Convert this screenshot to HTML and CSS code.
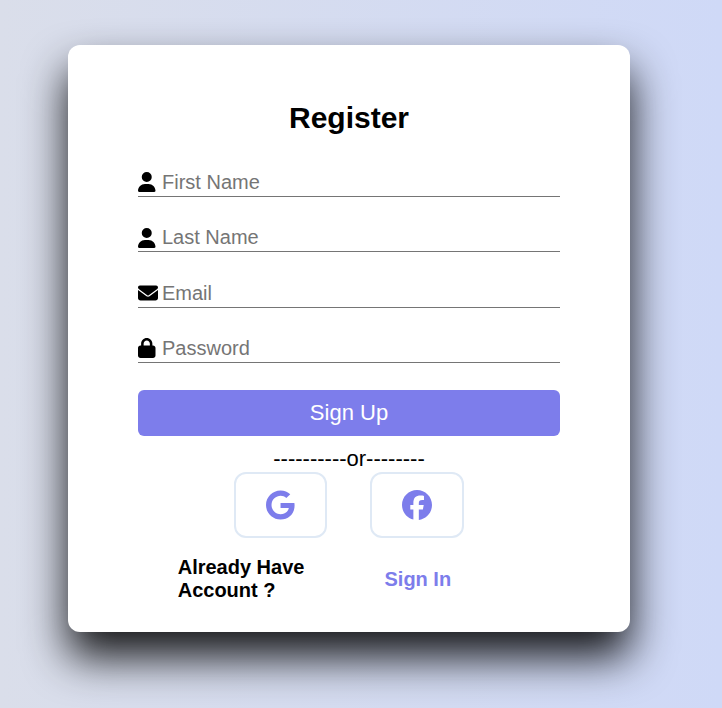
FILE: index.html
```
<!DOCTYPE html>
<html lang="en">
<head>
<meta charset="utf-8">
<title>Register</title>
<link rel="stylesheet" href="styles.css">
</head>
<body>
<main class="card">
  <h1 class="title">Register</h1>
  <form class="form">
    <label class="field">
      <svg class="icon" viewBox="0 0 448 512"><path d="M224 256A128 128 0 1 0 224 0a128 128 0 1 0 0 256zm-45.7 48C79.8 304 0 383.8 0 482.3C0 498.7 13.3 512 29.7 512H418.3c16.4 0 29.7-13.3 29.7-29.7C448 383.8 368.2 304 269.7 304H178.3z"/></svg>
      <input type="text" placeholder="First Name">
    </label>
    <label class="field">
      <svg class="icon" viewBox="0 0 448 512"><path d="M224 256A128 128 0 1 0 224 0a128 128 0 1 0 0 256zm-45.7 48C79.8 304 0 383.8 0 482.3C0 498.7 13.3 512 29.7 512H418.3c16.4 0 29.7-13.3 29.7-29.7C448 383.8 368.2 304 269.7 304H178.3z"/></svg>
      <input type="text" placeholder="Last Name">
    </label>
    <label class="field">
      <svg class="icon icon-wide" viewBox="0 0 512 512"><path d="M48 64C21.5 64 0 85.5 0 112c0 15.1 7.1 29.3 19.2 38.4L236.8 313.6c11.4 8.5 27 8.5 38.4 0L492.8 150.4c12.1-9.1 19.2-23.3 19.2-38.4c0-26.5-21.5-48-48-48H48zM0 176V384c0 35.3 28.7 64 64 64H448c35.3 0 64-28.7 64-64V176L294.4 339.2c-22.8 17.1-54 17.1-76.8 0L0 176z"/></svg>
      <input type="email" placeholder="Email">
    </label>
    <label class="field">
      <svg class="icon" viewBox="0 0 448 512"><path d="M144 144v48H304V144c0-44.2-35.8-80-80-80s-80 35.8-80 80zM80 192V144C80 64.5 144.5 0 224 0s144 64.5 144 144v48h16c35.3 0 64 28.7 64 64V448c0 35.3-28.7 64-64 64H64c-35.3 0-64-28.7-64-64V256c0-35.3 28.7-64 64-64H80z"/></svg>
      <input type="password" placeholder="Password">
    </label>
    <button class="submit" type="button">Sign Up</button>
  </form>
  <p class="or">----------or--------</p>
  <div class="social">
    <a class="provider provider-google"><svg class="google" viewBox="0 0 488 512"><path d="M488 261.8C488 403.3 391.1 504 248 504 110.8 504 0 393.2 0 256S110.8 8 248 8c66.8 0 123 24.5 166.3 64.9l-67.5 64.9C258.5 52.6 94.3 116.6 94.3 256c0 86.5 69.1 156.6 153.7 156.6 98.2 0 135-70.4 140.8-106.9H248v-85.3h236.1c2.3 12.7 3.9 24.9 3.9 41.4z"/></svg></a>
    <a class="provider"><svg class="facebook" viewBox="0 0 512 512"><path d="M512 256C512 114.6 397.4 0 256 0S0 114.6 0 256C0 376 82.7 476.8 194.2 504.5V334.2H141.4V256h52.8V222.3c0-87.1 39.4-127.5 125-127.5c16.2 0 44.2 3.2 55.7 6.4V172c-6-.6-16.5-1-29.6-1c-42 0-58.2 15.9-58.2 57.2V256h83.6l-14.4 78.2H287V510.1C413.8 494.8 512 386.9 512 256h0z"/></svg></a>
  </div>
  <div class="links">
    <p class="question">Already Have Account ?</p>
    <a class="signin">Sign In</a>
  </div>
</main>
</body>
</html>
```
FILE: styles.css
```
* {
  box-sizing: border-box;
  margin: 0;
  padding: 0;
}

body {
  height: 708px;
  padding: 45px 0 0 68px;
  overflow: hidden;
  font-family: "Liberation Sans", Arial, sans-serif;
  background: linear-gradient(to right, #dadeea, #cfd9f7);
}

.card {
  width: 562px;
  height: 587px;
  padding: 55px 70px 0;
  background: #fff;
  border-radius: 12px;
  box-shadow: 0 25px 44px rgba(0, 0, 1, 0.9);
}

.title {
  font-size: 30px;
  line-height: 35px;
  text-align: center;
}

.form {
  padding-top: 33px;
}

.field {
  display: flex;
  align-items: flex-start;
  height: 29px;
  margin-bottom: 26.33px;
  border-bottom: 1px solid #757575;
}

.field:last-of-type {
  margin-bottom: 27px;
}

.icon {
  width: 17.5px;
  height: 20px;
  margin: 4.4px 6.5px 0 0;
}

.icon-wide {
  width: 20px;
  margin-right: 4px;
}

.field input {
  flex: 1;
  min-width: 0;
  height: 23px;
  margin-top: 3px;
  border: 0;
  outline: 0;
  background: transparent;
  font: 20px "Liberation Sans", Arial, sans-serif;
}

.field input::placeholder {
  color: #757575;
}

.submit {
  display: block;
  width: 100%;
  height: 46px;
  border: 0;
  border-radius: 6px;
  background: #7d7deb;
  color: #fff;
  font: 22px "Liberation Sans", Arial, sans-serif;
}

.or {
  height: 36px;
  padding-top: 10px;
  font-size: 22px;
  line-height: 25px;
  text-align: center;
}

.social {
  display: flex;
  justify-content: center;
  gap: 43px;
}

.provider {
  display: flex;
  align-items: center;
  justify-content: center;
  width: 94px;
  height: 66px;
  border: 2px solid #dfe9f5;
  border-radius: 12px;
  fill: #7d7deb;
}

.provider-google {
  width: 93px;
}

.google {
  width: 28.6px;
  height: 30px;
}

.facebook {
  width: 30px;
  height: 30px;
}

.links {
  display: flex;
  align-items: center;
  gap: 65.8px;
  padding: 18px 0 0 39.7px;
  font-size: 20px;
  line-height: 23px;
  font-weight: bold;
}

.question {
  width: 141px;
}

.signin {
  padding-top: 2px;
  color: #7d7deb;
}
```
